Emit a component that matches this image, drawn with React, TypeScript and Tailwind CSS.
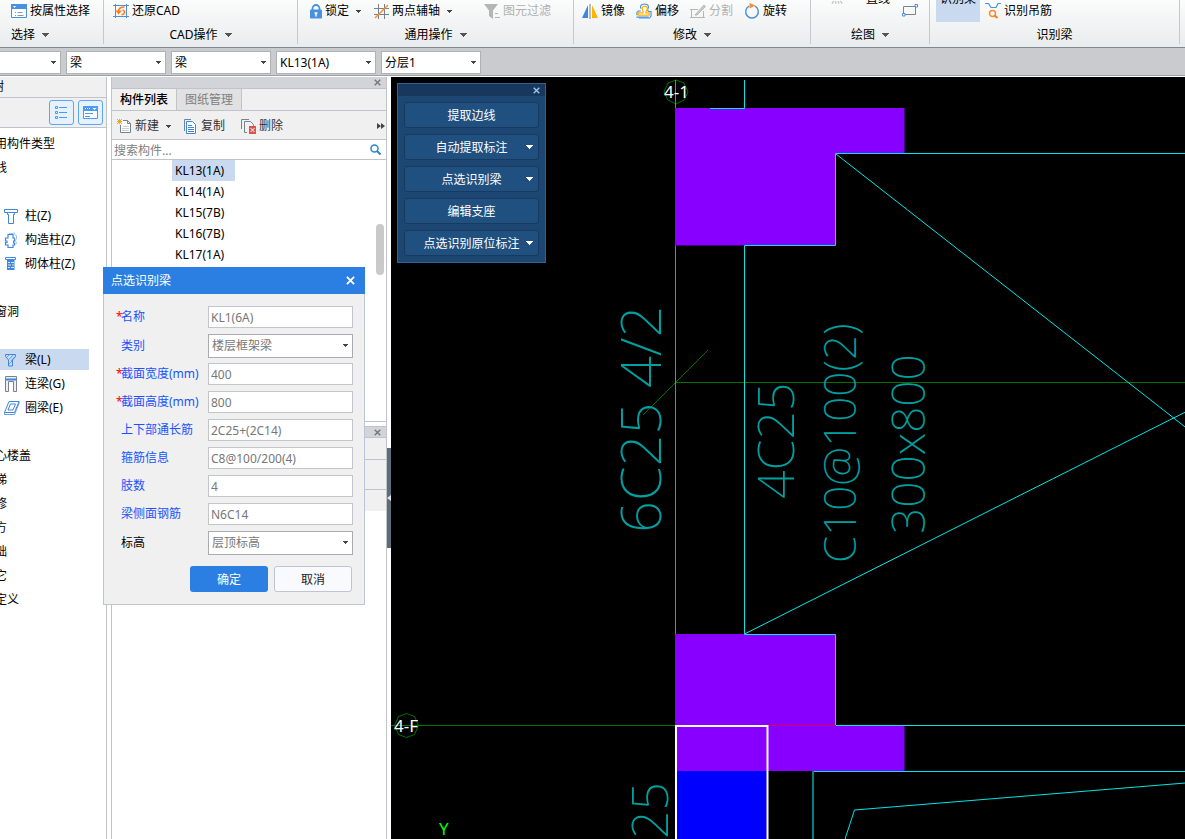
import type { ReactNode } from "react";

const Caret = ({ className = "text-[#555]" }: { className?: string }) => (
  <svg width="7" height="4" viewBox="0 0 7 4" className={`shrink-0 ${className}`} shapeRendering="crispEdges">
    <path d="M0 0h7L3.5 4z" fill="currentColor" />
  </svg>
);

const SmallCaret = () => (
  <svg width="5" height="3" viewBox="0 0 5 3" className="shrink-0 text-[#444]" shapeRendering="crispEdges">
    <path d="M0 0h5L2.5 3z" fill="currentColor" />
  </svg>
);

const Cross = ({ size = 7 }: { size?: number }) => (
  <svg width={size} height={size} viewBox="0 0 8 8" fill="none" stroke="currentColor" strokeWidth="1.6">
    <path d="M.8.8l6.4 6.4M7.2.8L.8 7.2" />
  </svg>
);

/* ribbon icons */

const PropertySelectIcon = () => (
  <svg width="16" height="15" viewBox="0 0 16 15" fill="none">
    <path d="M.5.5h15v13H.5z" fill="#fff" stroke="#4a8fe0" />
    <path d="M0 0h16v5H0z" fill="#4a8fe0" />
    <path d="M2 2h3l-1.5 2z" fill="#fff" />
    <path d="M4 8.5h1M6.500 8.500h5M4 11.500h1M6.500 11.500h6" stroke="#8a959f" />
  </svg>
);

const RestoreIcon = () => (
  <svg width="16" height="16" viewBox="0 0 16 16" fill="none">
    <path d="M2.500 1v14M13.500 1v14M0 2.500h16M0 13.500h16" stroke="#4a8fe0" />
    <path d="M11.500 4C7 4 5.500 5.500 5.500 8.500M8.500 11.500c3.500.500 4-4 1-4.500" stroke="#ff7c1f" strokeWidth="1.600" />
    <path d="M2.500 7.500h6.500L5.500 11.500z" fill="#ff7c1f" />
  </svg>
);

const LockIcon = () => (
  <svg width="12" height="15" viewBox="0 0 12 15" fill="none">
    <path d="M2.500 7V4.500a3.500 3.500 0 0 1 7 0V7" stroke="#4a8fe0" strokeWidth="1.800" />
    <rect y="5.500" width="12" height="9" rx="1" fill="#4a8fe0" />
    <path d="M6 9v3.500M4.500 9h3" stroke="#fff" strokeWidth="1.500" />
  </svg>
);

const AxisIcon = () => (
  <svg width="15" height="15" viewBox="0 0 15 15" fill="none">
    <path d="M4.500 0v15M10.500 0v15M0 4.500h15M0 10.500h15" stroke="#76828e" />
    <path d="M1 14L14 1" stroke="#ff8a2b" strokeWidth="1.400" />
  </svg>
);

const FilterIcon = () => (
  <svg width="16" height="15" viewBox="0 0 16 15">
    <path d="M0 0h14L9 6.500V15l-4-3V6.500z" fill="#b5b5b5" />
    <path d="M11 9.500h3M11 13.500h5" stroke="#b5b5b5" />
  </svg>
);

const MirrorIcon = () => (
  <svg width="16" height="15" viewBox="0 0 16 15">
    <path d="M6 1v13H0z" fill="#3f87dc" />
    <path d="M10 1v13h6z" fill="#ffb400" />
    <path d="M8 0v15" stroke="#76828e" />
  </svg>
);

const OffsetIcon = () => (
  <svg width="16" height="16" viewBox="0 0 17 16" fill="none">
    <path d="M5.500 5.500C4 4 4.500.500 9 .500S14 4 12.500 6c-.5 1 0 2 1 2.500h2.500v5l-1.500 2H3" stroke="#4a8fe0" strokeWidth="1.200" />
    <path d="M1 12.500V9.500L2.500 8H5M.5 14.500h13" stroke="#4a8fe0" strokeWidth="1.200" />
    <path d="M2.500 12.500h11.500v-2.500h-3.500c-.5-2 1.500-3 1.500-4.500 0-3.500-5.500-3.500-5.500 0 0 1.500 1.500 2.500 1 4.500H2.500z" fill="#fff" stroke="#ffb400" strokeWidth="1.300" />
  </svg>
);

const SplitIcon = () => (
  <svg width="16" height="15" viewBox="0 0 16 15" fill="none" stroke="#b5b5b5">
    <path d="M8 5.500H1.500v8h12V7M0 5.500h2M0 13.500h3M12 13.500h3" />
    <path d="M5 11L14 1l1.500 1.500L7 11z" fill="#ccc" />
  </svg>
);

const RotateIcon = () => (
  <svg width="16" height="16" viewBox="0 0 16 16" fill="none">
    <path d="M5 3.200A6.300 6.300 0 1 0 11 3.200" stroke="#4a8fe0" strokeWidth="1.400" />
    <path d="M5.500 0l6 2.500-6 3z" fill="#ff8a2b" />
  </svg>
);

const RectIcon = () => (
  <svg width="16" height="13" viewBox="0 0 16 13" fill="none">
    <path d="M1.500 2.500h12v8h-12z" stroke="#76828e" />
    <path d="M13 .500h2.500v2.500H13zM.5 9.500h2.500v2.500H.5z" fill="#fff" stroke="#4a8fe0" />
  </svg>
);

const HangerIcon = () => (
  <svg width="16" height="16" viewBox="0 0 16 16" fill="none">
    <path d="M0 .500h3.500L6 4.500h5L13 .500h3" stroke="#4a8fe0" strokeWidth="1.200" />
    <circle cx="7.500" cy="10.500" r="3" stroke="#ff8a2b" strokeWidth="1.500" />
    <path d="M9.500 12.500l3 2.500" stroke="#ff7c1f" strokeWidth="2.200" />
  </svg>
);

/* component tree icons */

const ColumnIcon = () => (
  <svg width="14" height="16" viewBox="0 0 14 16" fill="none" stroke="#3f87dc">
    <path d="M.5 1.500h13v3H.5z" />
    <path d="M3.500 4.500v2h1v9h5v-9h1v-2" />
  </svg>
);

const StructColumnIcon = () => (
  <svg width="14" height="16" viewBox="0 0 14 16" fill="none">
    <path d="M5 1.500h4l1-1 1.500 3h1v3l-1 2 1 3-2 1" stroke="#9cc2ec" />
    <path d="M4 2.500h5v3.500h1.500v3H9.500v2H10.500v2H9v2.500H4V13H1.500v-2.500h1.500V9H1.500V6H4z" stroke="#3f87dc" strokeWidth="1.200" />
  </svg>
);

const MasonryIcon = () => (
  <svg width="14" height="16" viewBox="0 0 14 16" fill="none">
    <path d="M1.500 1.500h10v2h-10z" stroke="#3f87dc" />
    <path d="M3 4h7.500v10H3z" fill="#3f87dc" />
    <path d="M4 6.500h2M7 6.500h3M4 9h3M8 9h2M4 11.500h2M7 11.500h3" stroke="#d8e8fa" />
  </svg>
);

const BeamIcon = () => (
  <svg width="14" height="16" viewBox="0 0 14 16" fill="none" stroke="#3f87dc">
    <path d="M1.500 2.500h10v2l-3 3.500v6h-4v-6l-3-3.500z" />
    <path d="M3 5l2.500-2.500M5 7.500l4.500-5M7 9l4-4.500M5 12l3-3" strokeWidth=".7" />
  </svg>
);

const LinkBeamIcon = () => (
  <svg width="14" height="16" viewBox="0 0 14 16" fill="none">
    <path d="M1.500.5h11v15h-3v-10h-5v10h-3z" fill="#eee" stroke="#76828e" />
    <path d="M2 2.500h10v2H2z" fill="#3f87dc" />
  </svg>
);

const RingBeamIcon = () => (
  <svg width="16" height="16" viewBox="0 0 16 16" fill="none" stroke="#3f87dc">
    <path d="M5 1.500h10L10.500 12.500H.5zM6.500 4h5L9 10H4z" />
    <path d="M.5 12.500v2h10l4.500-11v-2" strokeWidth=".8" />
  </svg>
);

const NewIcon = () => (
  <svg width="15" height="15" viewBox="0 0 15 15" fill="none">
    <path d="M6 1.500h4.500l3 3v9h-10V6" fill="#fff" stroke="#76828e" />
    <path d="M10.500 1.500v3h3" stroke="#76828e" />
    <path d="M6 7.500h6M5 9.500h7M5 11.500h7" stroke="#c9ced4" />
    <path d="M0 0l5 5M5 0L0 5M2.500 0v5M0 2.500h5" stroke="#f5a623" />
  </svg>
);

const CopyIcon = () => (
  <svg width="15" height="15" viewBox="0 0 15 15" fill="none">
    <path d="M1.500 12V.5H8" stroke="#76828e" />
    <path d="M3.500 2.500h6l3 3v9h-9z" fill="#fff" stroke="#3f87dc" />
    <path d="M5 6.500h4M5 8.500h6M5 10.500h6M5 12.500h6" stroke="#3f87dc" />
  </svg>
);

const DeleteIcon = () => (
  <svg width="15" height="15" viewBox="0 0 15 15" fill="none">
    <path d="M.5 10V.5H8M6 13.500H3.500v-11h6l3 3V7" stroke="#76828e" />
    <path d="M8 7h7v8H8z" fill="#d9534f" />
    <path d="M9.500 9l4 4M13.500 9l-4 4" stroke="#fff" />
  </svg>
);

function Tool({ icon, label, caret, disabled }: { icon: ReactNode; label: string; caret?: boolean; disabled?: boolean }) {
  return (
    <button type="button" disabled={disabled} className="flex items-center gap-[3px] whitespace-nowrap disabled:text-[#b0b0b0]">
      {icon}
      <span>{label}</span>
      {caret && (
        <span className="ml-1">
          <SmallCaret />
        </span>
      )}
    </button>
  );
}

function Group({ title, caret = true, className, children }: { title: string; caret?: boolean; className: string; children: ReactNode }) {
  return (
    <div className={`flex h-11 shrink-0 flex-col border-r border-[#c5c8cc] ${className}`}>
      <div className="flex h-[22px] items-center">{children}</div>
      <button type="button" className="mt-1 flex h-[18px] items-center justify-center gap-[7px]">
        {title}
        {caret && <Caret />}
      </button>
    </div>
  );
}

function Ribbon() {
  return (
    <header className="flex h-12 shrink-0 overflow-hidden border-b border-[#85898e] bg-linear-to-b from-[#fbfcfc] to-[#e9eced]">
      <div className="flex h-11 w-26 shrink-0 flex-col border-r border-[#c5c8cc] pl-[11px]">
        <div className="flex h-[22px] items-center">
          <Tool icon={<PropertySelectIcon />} label="按属性选择" />
        </div>
        <button type="button" className="mt-1 flex h-[18px] items-center gap-[7px]">
          选择
          <Caret />
        </button>
      </div>
      <Group title="CAD操作" className="w-[194px]">
        <div className="pl-[9px]">
          <Tool icon={<RestoreIcon />} label="还原CAD" />
        </div>
      </Group>
      <Group title="通用操作" className="w-[276px]">
        <div className="flex gap-[13px] pl-3">
          <Tool icon={<LockIcon />} label="锁定" caret />
          <Tool icon={<AxisIcon />} label="两点辅轴" caret />
        </div>
        <div className="ml-8">
          <Tool icon={<FilterIcon />} label="图元过滤" disabled />
        </div>
      </Group>
      <Group title="修改" className="w-[237px]">
        <div className="flex gap-[11px] pl-2">
          <Tool icon={<MirrorIcon />} label="镜像" />
          <Tool icon={<OffsetIcon />} label="偏移" />
          <Tool icon={<SplitIcon />} label="分割" disabled />
          <Tool icon={<RotateIcon />} label="旋转" />
        </div>
      </Group>
      <Group title="绘图" className="w-[119px]">
        <div className="flex h-full items-start pl-5">
          <button type="button" disabled className="-mt-[9px] text-[#b0b0b0]">
            点
          </button>
          <button type="button" className="-mt-[9px] ml-[23px]">
            直线
          </button>
          <button type="button" aria-label="矩形" className="mt-1 ml-3">
            <RectIcon />
          </button>
        </div>
      </Group>
      <Group title="识别梁" caret={false} className="w-[250px]">
        <div className="flex h-full gap-[5px] pl-[6px]">
          <button type="button" className="flex h-[22px] w-11 items-start justify-center bg-[#c9d9f0]">
            <span className="-mt-[9px] whitespace-nowrap">识别梁</span>
          </button>
          <Tool icon={<HangerIcon />} label="识别吊筋" />
        </div>
      </Group>
    </header>
  );
}

const filters = [
  { name: "楼层", value: "" },
  { name: "构件大类", value: "梁" },
  { name: "构件类型", value: "梁" },
  { name: "构件", value: "KL13(1A)" },
  { name: "分层", value: "分层1" },
];

function FilterBar() {
  return (
    <div className="flex h-7 shrink-0 items-end gap-[5px] overflow-hidden border-b border-[#9da1a5] bg-[#c9cbcf] pb-px">
      {filters.map((f, i) => (
        <div key={f.name} className={`relative h-[23px] ${i === 0 ? "w-[61px]" : "w-[100px]"}`}>
          <select
            aria-label={f.name}
            className={`h-full w-full appearance-none border border-[#aeb1b5] bg-white pl-[3px] ${i === 0 ? "border-l-0" : ""}`}
          >
            <option>{f.value}</option>
          </select>
          <span className="pointer-events-none absolute inset-y-0 right-[5px] flex items-center">
            <SmallCaret />
          </span>
        </div>
      ))}
    </div>
  );
}

type Node = { label: string; icon?: ReactNode; active?: boolean };

const nodes: Node[] = [
  { label: "常用构件类型" },
  { label: "轴线" },
  { label: "" },
  { label: "柱(Z)", icon: <ColumnIcon /> },
  { label: "构造柱(Z)", icon: <StructColumnIcon /> },
  { label: "砌体柱(Z)", icon: <MasonryIcon /> },
  { label: "" },
  { label: "门窗洞" },
  { label: "" },
  { label: "梁(L)", icon: <BeamIcon />, active: true },
  { label: "连梁(G)", icon: <LinkBeamIcon /> },
  { label: "圈梁(E)", icon: <RingBeamIcon /> },
  { label: "" },
  { label: "空心楼盖" },
  { label: "楼梯" },
  { label: "装修" },
  { label: "土方" },
  { label: "基础" },
  { label: "其它" },
  { label: "自定义" },
];

function ComponentTree() {
  return (
    <nav className="w-[107px] shrink-0 overflow-hidden border-r border-[#c0c3c8] bg-white">
      <div className="h-[21px] border-b border-[#c0c3c8] bg-[#f0f0f0]">
        <span className="-ml-8 leading-5">导航树</span>
      </div>
      <div className="flex h-[30px] items-center justify-end gap-1 border-b border-[#c0c3c8] bg-[#f0f0f0] pr-[3px]">
        <button type="button" aria-label="列表" className="flex size-[25px] items-center justify-center rounded-[3px] border border-[#5aa5f5] bg-[#e5f1fd]">
          <svg width="13" height="13" viewBox="0 0 13 13" fill="none" stroke="#4a9bf0">
            <path d="M.5.5h2v2h-2zM.5 5.500h2v2h-2zM.5 10.500h2v2h-2zM4 1.500h8M4 6.500h8M4 11.500h8" />
          </svg>
        </button>
        <button type="button" aria-label="面板" className="flex size-[25px] items-center justify-center rounded-[3px] border border-[#5aa5f5] bg-[#e5f1fd]">
          <svg width="15" height="13" viewBox="0 0 15 13" fill="none">
            <path d="M.5.5h14v12H.5z" fill="#fff" stroke="#4a9bf0" />
            <path d="M0 0h15v5H0z" fill="#4a9bf0" />
            <path d="M2 2.500h1M4 2.500h1M6 2.500h1" stroke="#fff" />
            <path d="M9.500 2h4l-2 2z" fill="#fff" />
            <path d="M2 7.500h8M2 10.500h5" stroke="#4a9bf0" />
          </svg>
        </button>
      </div>
      <ul className="pt-[3px]">
        {nodes.map((node, i) => (
          <li key={i} className="flex h-6 items-center">
            {node.icon ? (
              <a href="#" className={`flex h-[21px] w-[89px] items-center pt-[2px] pl-1 whitespace-nowrap ${node.active ? "bg-[#c9d9f0]" : ""}`}>
                <span className="w-[21px]">{node.icon}</span>
                {node.label}
              </a>
            ) : (
              <span className="-ml-[17px] pt-[2px] whitespace-nowrap">{node.label}</span>
            )}
          </li>
        ))}
      </ul>
    </nav>
  );
}

const beams = ["KL13(1A)", "KL14(1A)", "KL15(7B)", "KL16(7B)", "KL17(1A)"];

function ComponentList() {
  return (
    <section className="ml-1 flex w-[276px] shrink-0 flex-col border-x border-[#c0c3c8] bg-white">
      <div className="flex h-3 shrink-0 items-center justify-end border-b border-[#c0c3c8] bg-[#d2d4da] pr-[5px] text-[#777]">
        <button type="button" aria-label="关闭">
          <Cross />
        </button>
      </div>
      <div role="tablist" className="flex h-[22px] shrink-0 border-b border-[#c0c3c8] bg-[#f0f0f0]">
        <button type="button" role="tab" aria-selected="true" className="w-[65px] border-r border-[#c0c3c8] font-medium">
          构件列表
        </button>
        <button type="button" role="tab" aria-selected="false" className="w-[65px] border-r border-[#c0c3c8] bg-[#e1e1e1] text-[#808080]">
          图纸管理
        </button>
      </div>
      <div className="flex h-[29px] shrink-0 items-center gap-3 border-b border-[#c0c3c8] bg-[#f0f0f0] pt-[2px] pl-[5px] text-[#333]">
        <Tool icon={<NewIcon />} label="新建" caret />
        <div className="flex gap-4">
          <Tool icon={<CopyIcon />} label="复制" />
          <Tool icon={<DeleteIcon />} label="删除" />
        </div>
        <button type="button" aria-label="更多" className="mr-px ml-auto">
          <svg width="8" height="6" viewBox="0 0 8 6" fill="#444">
            <path d="M0 0l4 3-4 3zM4 0l4 3-4 3z" />
          </svg>
        </button>
      </div>
      <div className="flex h-5 shrink-0 items-center border-b border-[#c0c3c8] pr-[5px] pl-[2px]">
        <input aria-label="搜索构件" placeholder="搜索构件..." className="h-full min-w-0 flex-1 pt-[2px] outline-none placeholder:text-[#808080]" />
        <svg width="11" height="11" viewBox="0 0 11 11" fill="none" stroke="#2a86c8" strokeWidth="1.500">
          <circle cx="4.500" cy="4.500" r="3.500" />
          <path d="M7 7l3.500 3.500" strokeWidth="2" />
        </svg>
      </div>
      <div className="flex h-[262px] shrink-0 justify-between border-b border-[#c0c3c8]">
        <ul className="pl-15">
          {beams.map((b, i) => (
            <li key={b} className={`flex h-[21px] w-[63px] items-center pl-[3px] ${i === 0 ? "bg-[#c9d9f0]" : ""}`}>
              {b}
            </li>
          ))}
        </ul>
        <div className="mt-16 mr-[2px] h-[51px] w-2 rounded-full bg-[#c9c9c9]" />
      </div>
      <div className="mt-1 shrink-0 border-t border-[#c0c3c8] bg-[#f0f0f0]">
        <div className="flex h-[11px] items-center justify-end border-b border-[#c0c3c8] bg-[#d2d4da] pr-[5px] text-[#777]">
          <button type="button" aria-label="关闭属性">
            <Cross />
          </button>
        </div>
        <div className="h-[22px] border-b border-[#c0c3c8]" />
        <div className="h-[30px] border-b border-[#c0c3c8]" />
        <div className="h-[21px]" />
      </div>
    </section>
  );
}

const cadLabels = [
  { x: 661, y: 533, text: "6C25 4/2", size: "text-[56px]" },
  { x: 794, y: 499, text: "4C25", size: "text-[50px]" },
  { x: 856, y: 563, text: "C10@100(2)", size: "text-[44px]" },
  { x: 925, y: 534, text: "300x800", size: "text-[46px]" },
  { x: 668, y: 839, text: "25", size: "text-[50px]" },
];

function Drawing() {
  return (
    <svg className="absolute inset-0 h-full w-full" aria-label="梁平面图">
      <g transform="translate(-391 -77)" fill="none">
        <g fill="#8800ff">
          <path d="M676 108h228.500v45.500H836V245.500H676z" />
          <path d="M676 634h160v92h68.500v45H676z" />
        </g>
        <path d="M676 771h92v80h-92z" fill="#0000ff" />

        <g stroke="#007300">
          <path d="M675.500 80V246M675.500 634v92M391 725.500h285M676 382.500h720M643 415l65-65" />
          <path d="M676 80l8 3 4 9-4 8-8 4-8-4-4-8 4-9zM406.500 713.500l8 3 4 9-4 9-8 3-8-3-4-9 4-9z" />
        </g>

        <g fill="#00a0a0" className="font-extralight">
          {cadLabels.map((l) => (
            <text key={l.x} transform={`translate(${l.x} ${l.y}) rotate(-90)`} className={l.size}>
              {l.text}
            </text>
          ))}
        </g>

        <g stroke="#00e5e5">
          <path d="M675.500 80v28M675.500 246v388" stroke="#00b4b4" />
          <path d="M744.500 80v28.500H710M744.500 634V245.500h91v-92H1400" />
          <path d="M836 154l564 441M744.500 634L1400 304" />
          <path d="M744.500 634.500h91v91H1400M813 771.500h587" />
          <path d="M845 839l9.500-29L1400 765.500" />
          <path d="M813 771v80" stroke="#008080" strokeWidth="2" />
        </g>
        <path d="M768 725.500h68" stroke="#e0004f" />
        <path d="M676 851V726h91.500v125" stroke="#fff" strokeWidth="2" />

        <g className="text-[17px]">
          <text x="664" y="98" fill="#fff">4-1</text>
          <text x="394" y="732" fill="#fff">4-F</text>
          <text x="439" y="835" fill="#00ff00">Y</text>
        </g>
      </g>
    </svg>
  );
}

const actions = [
  { label: "提取边线" },
  { label: "自动提取标注", menu: true },
  { label: "点选识别梁", menu: true },
  { label: "编辑支座" },
  { label: "点选识别原位标注", menu: true },
];

function ActionPanel() {
  return (
    <div className="absolute top-[6px] left-[6px] w-[149px] border border-[#2a64a0] bg-[#1d4771] text-white">
      <div className="flex h-3 items-center justify-end bg-[#17375c] pr-[5px] text-[#9cc4ec]">
        <button type="button" aria-label="关闭工具">
          <Cross />
        </button>
      </div>
      <div className="flex flex-col gap-[6px] px-[6px] py-[6px]">
        {actions.map((a) => (
          <button
            key={a.label}
            type="button"
            className="relative h-[26px] rounded-[3px] border border-[#163a60] bg-[#205080] pt-[2px] whitespace-nowrap"
          >
            {a.label}
            {a.menu && (
              <span className="absolute top-[10px] right-[5px]">
                <Caret className="text-white" />
              </span>
            )}
          </button>
        ))}
      </div>
    </div>
  );
}

type Field = { id: string; label: string; value: string; required?: boolean; select?: boolean; plain?: boolean };

const fields: Field[] = [
  { id: "name", label: "名称", value: "KL1(6A)", required: true },
  { id: "kind", label: "类别", value: "楼层框架梁", select: true },
  { id: "width", label: "截面宽度(mm)", value: "400", required: true },
  { id: "height", label: "截面高度(mm)", value: "800", required: true },
  { id: "through", label: "上下部通长筋", value: "2C25+(2C14)" },
  { id: "stirrup", label: "箍筋信息", value: "C8@100/200(4)" },
  { id: "legs", label: "肢数", value: "4" },
  { id: "side", label: "梁侧面钢筋", value: "N6C14" },
  { id: "level", label: "标高", value: "层顶标高", select: true, plain: true },
];

function BeamDialog() {
  return (
    <div role="dialog" aria-label="点选识别梁" className="absolute top-[267px] left-[103px] w-[262px]">
      <div className="flex h-[27px] items-center justify-between bg-[#2b7fe2] pr-[10px] pl-2 text-white">
        点选识别梁
        <button type="button" aria-label="关闭对话框">
          <Cross size={9} />
        </button>
      </div>
      <form className="border border-t-0 border-[#bcc5d8] bg-[#f0f0f0] pt-[9px] pr-[11px] pb-3 pl-3">
        {fields.map((f) => (
          <div key={f.id} className={`flex items-center ${f.select ? "h-[29px]" : "h-7"}`}>
            <label htmlFor={f.id} className={`flex w-[92px] shrink-0 whitespace-nowrap ${f.plain ? "text-black" : "text-[#1a53ff]"}`}>
              <span className="w-[5px] text-[#f00]">{f.required && "*"}</span>
              {f.label}
            </label>
            {f.select ? (
              <div className="relative h-6 w-[145px]">
                <select id={f.id} className="h-full w-full appearance-none border border-[#a9abb0] bg-white pt-px pl-[3px] text-[#777]">
                  <option>{f.value}</option>
                </select>
                <span className="pointer-events-none absolute inset-y-0 right-[5px] flex items-center">
                  <SmallCaret />
                </span>
              </div>
            ) : (
              <input id={f.id} defaultValue={f.value} className="h-[22px] w-[145px] border border-[#c3c5cc] bg-white pl-[2px] text-[#777]" />
            )}
          </div>
        ))}
        <div className="mt-[9px] flex justify-end gap-[6px] pr-px">
          <button type="submit" className="h-[26px] w-[78px] rounded-[3px] bg-[#2b7fe2] pt-px text-white">
            确定
          </button>
          <button type="button" className="h-[26px] w-[78px] rounded-[3px] border border-[#bcc5d8] bg-[#f8fafd] pt-px text-[#222]">
            取消
          </button>
        </div>
      </form>
    </div>
  );
}

export default function App() {
  return (
    <div className="relative flex h-screen flex-col overflow-hidden bg-white font-['Noto_Sans','Noto_Sans_CJK_SC',sans-serif] text-xs text-black">
      <Ribbon />
      <FilterBar />
      <main className="flex min-h-0 flex-1 pt-px">
        <ComponentTree />
        <ComponentList />
        <div className="flex w-1 shrink-0 flex-col bg-white">
          <button type="button" aria-label="收起" className="mt-[371px] flex h-25 items-center bg-[#5f6b78]">
            <svg width="4" height="6" viewBox="0 0 4 6" fill="#dfe3e8">
              <path d="M4 0v6L0 3z" />
            </svg>
          </button>
        </div>
        <div className="relative flex-1 overflow-hidden bg-black">
          <Drawing />
          <ActionPanel />
        </div>
      </main>
      <BeamDialog />
    </div>
  );
}
